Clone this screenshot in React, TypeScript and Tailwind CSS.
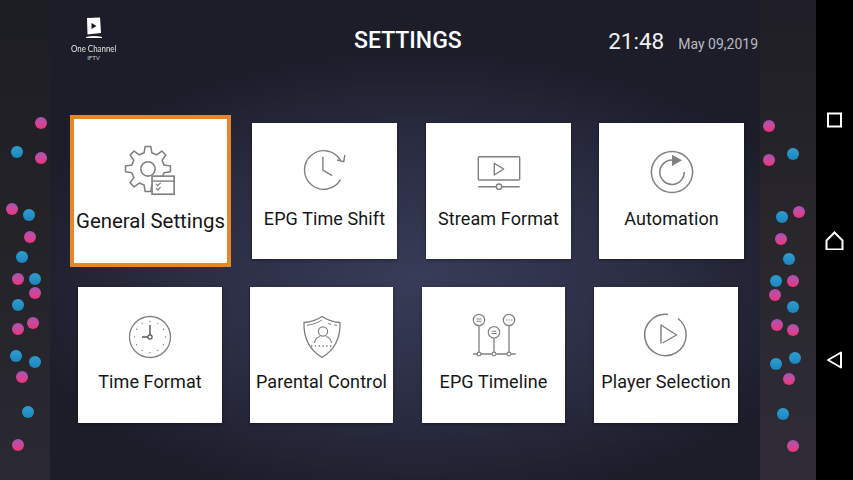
import React from 'react'

const PINK = 'bg-gradient-to-b from-[#a652b4] to-[#ee2f7c]'
const BLUE = 'bg-gradient-to-b from-[#2f9ed0] to-[#1b85bd]'

// Decoration dots on the side bands: [x, y, pink?]
const dots: [number, number, boolean][] = [
  [41, 123, true], [17, 152, false], [41, 158, true], [12, 209, true], [29, 215, false], [30, 237, true],
  [22, 257, false], [18, 279, true], [35, 279, false], [35, 293, true], [18, 305, false], [33, 323, true],
  [18, 329, true], [16, 356, false], [35, 362, false], [22, 377, true], [28, 412, false], [18, 445, true],
  [769, 126, true], [793, 154, false], [769, 160, true], [799, 212, true], [782, 217, false], [781, 239, true],
  [789, 259, false], [776, 281, false], [793, 281, true], [775, 295, true], [793, 307, false], [777, 325, true],
  [793, 330, true], [795, 358, false], [776, 364, false], [789, 379, true], [783, 414, false], [793, 446, true],
]

const gearPath = (cx: number, cy: number, outer: number, inner: number, teeth: number) => {
  const pts: string[] = []
  const step = (Math.PI * 2) / teeth
  for (let i = 0; i < teeth; i++) {
    const a = i * step
    const w = [-0.3, -0.16, 0.16, 0.3]
    const r = [inner, outer, outer, inner]
    w.forEach((o, k) => {
      const ang = a + o * step
      pts.push(`${(cx + Math.cos(ang) * r[k]).toFixed(2)} ${(cy + Math.sin(ang) * r[k]).toFixed(2)}`)
    })
  }
  return `M${pts.join('L')}Z`
}

const Svg = ({ size = 48, children }: { size?: number; children: React.ReactNode }) => (
  <svg width={size} height={size} viewBox="0 0 48 48" fill="none" stroke="#808080" strokeWidth="1.3" className="shrink-0">
    {children}
  </svg>
)

const GearIcon = () => (
  <Svg size={53}>
    <path d={gearPath(21.7, 23.5, 20.5, 15, 8)} strokeLinejoin="round" strokeWidth="1.4" />
    <circle cx="21.7" cy="23.5" r="6.5" strokeWidth="1.4" />
    <rect x="25.4" y="30" width="20" height="16.4" fill="#fff" strokeWidth="1.5" />
    <path d="M25.4 34.5H45.4" strokeWidth="1.3" />
    <path d="M29 37l1.6 1.6 2.6-2.6M29 41l1.6 1.6 2.6-2.6" strokeWidth="1.1" />
  </Svg>
)

const ClockShiftIcon = () => (
  <Svg>
    <path d="M39.5 12.3A19.3 19.3 0 1 0 39.5 31.7" strokeWidth="1.4" />
    <path d="M21.9 8.7V22L31.2 27.7" strokeWidth="1.4" />
    <path d="M43.8 7L42.8 13.7L36 12" strokeWidth="1.4" />
  </Svg>
)

const StreamIcon = () => (
  <Svg>
    <rect x="3.3" y="8.7" width="41.4" height="23.3" rx="1" strokeWidth="1.4" />
    <path d="M19.3 15.3L28.7 21L19.3 27Z" strokeWidth="1.4" strokeLinejoin="round" />
    <path d="M3.3 38.7H21.3M26.7 38.7H44.7" strokeWidth="1.4" />
    <circle cx="24" cy="38.7" r="2.7" strokeWidth="1.4" />
  </Svg>
)

const AutomationIcon = () => (
  <Svg>
    <circle cx="24" cy="24" r="20.6" strokeWidth="1.5" />
    <path d="M24 12A12.2 12.2 0 1 0 36.2 24" strokeWidth="1.5" />
    <path d="M24 6.7L34 12.3L24 18Z" fill="#808080" stroke="none" />
  </Svg>
)

const TimeIcon = () => {
  const ticks = [0, 30, 60, 90, 120, 150, 180, 210, 240, 270, 300, 330]
  return (
    <Svg>
      <circle cx="24" cy="24" r="20.5" strokeWidth="1.3" />
      {ticks.map((t) => (
        <circle
          key={t}
          cx={24 + Math.sin((t * Math.PI) / 180) * 15.5}
          cy={24 - Math.cos((t * Math.PI) / 180) * 15.5}
          r="0.7"
          fill="#808080"
          stroke="none"
        />
      ))}
      <path d="M24 12V22M22 24H16" stroke="#555" strokeWidth="1.4" />
      <circle cx="24" cy="24" r="2.1" stroke="#555" strokeWidth="1.2" />
    </Svg>
  )
}

const ShieldIcon = () => (
  <Svg>
    <path d="M24 3.5C19 7 13 9 6 9.5C5.5 24 10 36 24 44.5C38 36 42.5 24 42 9.5C35 9 29 7 24 3.5Z" strokeWidth="1.3" strokeLinejoin="round" />
    <path d="M24 7C19.5 10 14.5 11.5 9 12.3M30 10.5L33 11.5M36 12L39 12.3" strokeWidth="1" />
    <circle cx="25" cy="18.5" r="4.6" strokeWidth="1.2" />
    <path d="M16.5 30C17 26 20 24 22 23.5M33.5 30C33 26 30 24 28 23.5" strokeWidth="1.2" />
    <path d="M13 33H36" strokeWidth="1.4" strokeDasharray="1.4 2.4" />
  </Svg>
)

const TimelineIcon = () => (
  <Svg>
    <circle cx="9" cy="7" r="5.7" strokeWidth="1.2" />
    <circle cx="24" cy="19.3" r="5.7" strokeWidth="1.2" />
    <circle cx="39" cy="7" r="5.7" strokeWidth="1.2" />
    <path d="M6.5 6H11.5M6.5 8.3H11.5M21.5 18.2H26.5M21.5 20.500H26.5" strokeWidth="1" />
    <path d="M36 7H37.200M38.400 7H39.600M40.800 7H42" strokeWidth="1.200" />
    <path d="M9 12.700V39M24 25V39M39 12.700V39" strokeWidth="1.300" />
    <path d="M3 41H7M11 41H22M26 41H37M41 41H45.700" strokeWidth="1.300" />
    <circle cx="9" cy="41" r="1.900" strokeWidth="1.100" />
    <circle cx="24" cy="41" r="1.900" strokeWidth="1.100" />
    <circle cx="39" cy="41" r="1.900" strokeWidth="1.100" />
  </Svg>
)

const PlayerIcon = () => (
  <Svg>
    <path d="M36 5.500A20.700 20.700 0 1 1 26 1.400" strokeWidth="1.500" />
    <path d="M19 30.500V12L34.500 22L20.500 30" strokeWidth="1.400" strokeLinejoin="round" />
  </Svg>
)

const Logo = () => (
  <div className="flex w-[45px] flex-col items-center">
    <svg width="18" height="22" viewBox="0 0 18 22">
      <path d="M2 1L15 0.500L16 16L2.500 17.500Z" fill="#fff" />
      <path d="M6.500 6L11.500 9L6.500 12Z" fill="#15161f" />
      <path d="M1 20C6 18.500 12 18.500 17 20V21H1Z" fill="#fff" />
    </svg>
    <span className="mt-[3px] scale-x-[0.79] whitespace-nowrap font-['Lato',sans-serif] text-[10px] leading-[12px] text-[#e4e4e4]">One Channel</span>
    <span className="mt-[0px] font-['Lato',sans-serif] text-[6px] leading-[8px] text-[#cfcfcf]">IFTV</span>
  </div>
)

const Card = ({ icon, label, className }: { icon: React.ReactNode; label: string; className: string }) => (
  <div className={`flex h-[136px] flex-col items-center bg-white shadow-[0_1px_3px_rgba(0,0,0,0.4)] ${className}`}>
    {icon}
    <span className="whitespace-nowrap text-[18px] leading-[24px] tracking-[0.1px] text-[#161616]">{label}</span>
  </div>
)

export default function App() {
  return (
    <div className="relative flex h-[480px] w-[853px] overflow-hidden bg-black font-['Roboto',sans-serif]">
      <div className="flex w-[816px]">
        <div className="w-[50px] bg-gradient-to-b from-[#1d1d24] via-[#232328] to-[#2b2933]" />
        <main className="flex flex-1 flex-col bg-[radial-gradient(ellipse_420px_230px_at_52%_58%,#383c58_0%,#2b2d43_55%,#1c1d29_100%)]">
          <header className="flex h-[115px] items-start">
            <div className="ml-[21px] mt-[17px]"><Logo /></div>
            <h1 className="ml-[238px] mt-[27px] whitespace-nowrap text-[23px] font-medium leading-[28px] text-white">SETTINGS</h1>
            <div className="ml-auto mr-[2px] mt-[26px] flex items-baseline gap-[14px] whitespace-nowrap">
              <span className="text-[22.5px] leading-[30px] text-[#f0f0f0]">21:48</span>
              <span className="text-[14px] text-[#b9b9c0]">May 09,2019</span>
            </div>
          </header>

          <section className="flex h-[152px] items-center pl-[20px]">
            <div className="flex h-[152px] w-[161px] flex-col items-center border-[4px] border-[#e5862a] bg-white pt-[24px]">
              <GearIcon />
              <span className="mt-[12px] whitespace-nowrap text-[20.4px] leading-[26px] text-[#161616]">General Settings</span>
            </div>
            <Card icon={<ClockShiftIcon />} label="EPG Time Shift" className="ml-[21px] w-[145px] gap-[11px] pt-[25px]" />
            <Card icon={<StreamIcon />} label="Stream Format" className="ml-[29px] w-[145px] gap-[11px] pt-[25px]" />
            <Card icon={<AutomationIcon />} label="Automation" className="ml-[28px] w-[145px] gap-[11px] pt-[25px]" />
          </section>

          <section className="mt-[20px] flex pl-[28px]">
            <Card icon={<TimeIcon />} label="Time Format" className="w-[144px] gap-[9px] pt-[26px]" />
            <Card icon={<ShieldIcon />} label="Parental Control" className="ml-[28px] w-[143px] gap-[9px] pt-[26px]" />
            <Card icon={<TimelineIcon />} label="EPG Timeline" className="ml-[29px] w-[143px] gap-[9px] pt-[26px]" />
            <Card icon={<PlayerIcon />} label="Player Selection" className="ml-[29px] w-[144px] gap-[9px] pt-[26px]" />
          </section>
        </main>
        <div className="w-[56px] bg-gradient-to-b from-[#1f1e26] via-[#29272c] to-[#2f2c38]" />
      </div>

      {/* Android nav bar */}
      <nav className="flex w-[37px] flex-col items-center gap-[100px] pt-[110px]">
        <svg width="20" height="20" viewBox="0 0 20 20" fill="none" stroke="#fff" strokeWidth="2"><rect x="3" y="3.5" width="13" height="13" /></svg>
        <svg width="20" height="20" viewBox="0 0 20 20" fill="none" stroke="#fff" strokeWidth="2"><path d="M1.500 19.500V10.500L9.500 2.500L17.500 10.500V19.500Z" /></svg>
        <svg width="20" height="20" viewBox="0 0 20 20" fill="none" stroke="#fff" strokeWidth="2"><path d="M16 2.500V17.500L3 10Z" strokeLinejoin="round" /></svg>
      </nav>

      {dots.map(([x, y, pink], i) => (
        <span
          key={i}
          className={`absolute h-[12px] w-[12px] rounded-full blur-[0.4px] ${pink ? PINK : BLUE}`}
          style={{ left: x - 6, top: y - 6 }}
        />
      ))}
    </div>
  )
}
